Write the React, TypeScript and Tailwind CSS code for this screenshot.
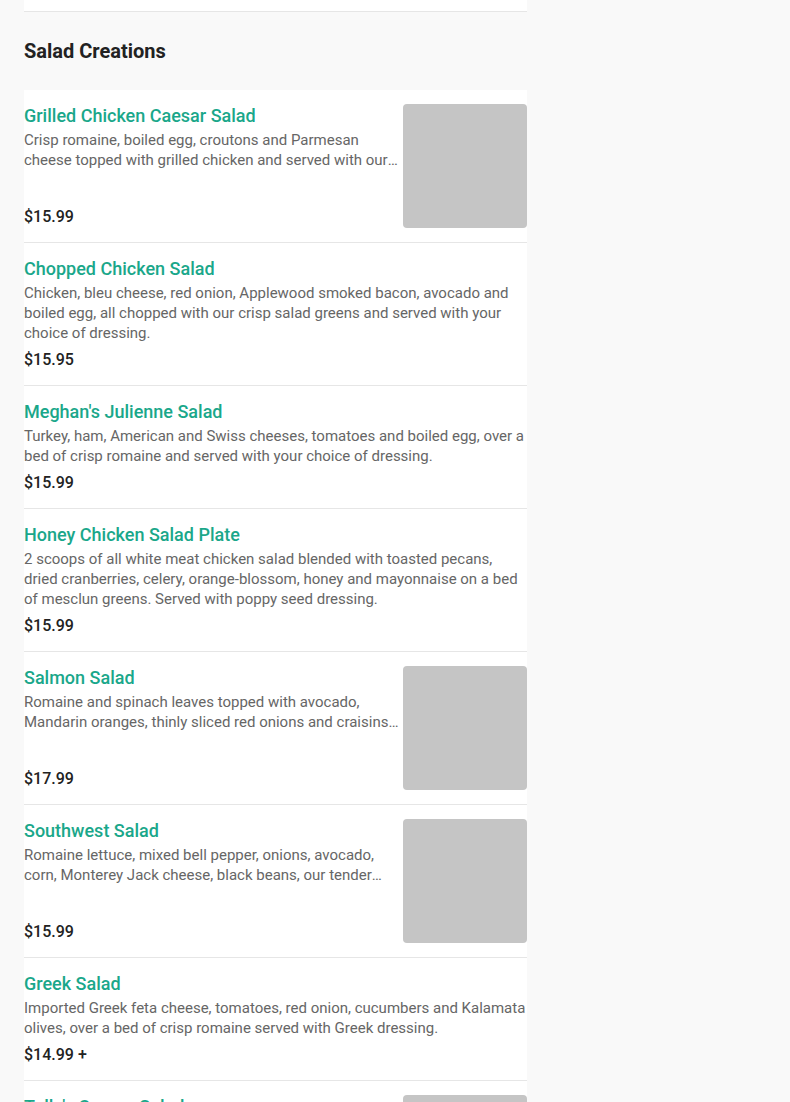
import React from "react";

type Item = { name: string; desc: string; price: string; img?: boolean };

const items: Item[] = [
  {
    name: "Grilled Chicken Caesar Salad",
    desc: "Crisp romaine, boiled egg, croutons and Parmesan cheese topped with grilled chicken and served with our homemade Caesar dressing.",
    price: "$15.99",
    img: true,
  },
  {
    name: "Chopped Chicken Salad",
    desc: "Chicken, bleu cheese, red onion, Applewood smoked bacon, avocado and boiled egg, all chopped with our crisp salad greens and served with your choice of dressing.",
    price: "$15.95",
  },
  {
    name: "Meghan's Julienne Salad",
    desc: "Turkey, ham, American and Swiss cheeses, tomatoes and boiled egg, over a bed of crisp romaine and served with your choice of dressing.",
    price: "$15.99",
  },
  {
    name: "Honey Chicken Salad Plate",
    desc: "2 scoops of all white meat chicken salad blended with toasted pecans, dried cranberries, celery, orange-blossom, honey and mayonnaise on a bed of mesclun greens. Served with poppy seed dressing.",
    price: "$15.99",
  },
  {
    name: "Salmon Salad",
    desc: "Romaine and spinach leaves topped with avocado, Mandarin oranges, thinly sliced red onions and craisins with grilled salmon and served with raspberry vinaigrette.",
    price: "$17.99",
    img: true,
  },
  {
    name: "Southwest Salad",
    desc: "Romaine lettuce, mixed bell pepper, onions, avocado, corn, Monterey Jack cheese, black beans, our tender grilled chicken and tortilla strips with chipotle ranch dressing.",
    price: "$15.99",
    img: true,
  },
  {
    name: "Greek Salad",
    desc: "Imported Greek feta cheese, tomatoes, red onion, cucumbers and Kalamata olives, over a bed of crisp romaine served with Greek dressing.",
    price: "$14.99 +",
  },
  {
    name: "Tully's Caesar Salad",
    desc: "Crisp romaine, croutons and Parmesan cheese tossed with our homemade Caesar dressing.",
    price: "$12.99",
    img: true,
  },
];

function Row({ item }: { item: Item }) {
  return (
    <div className="flex gap-1 border-b border-[#e6e6e6] py-[14px]">
      <div className="flex min-w-0 flex-1 flex-col justify-between">
        <div>
          <div className="pt-[1px] text-[18px] leading-[22px] font-medium text-[#1aa78a]">{item.name}</div>
          <div
            className={
              "mt-[3px] text-[15px] leading-[20px] text-[#666666] " + (item.img ? "line-clamp-2" : "")
            }
          >
            {item.desc}
          </div>
        </div>
        <div className="mt-[4px] pt-[2px] text-[16px] leading-[22px] font-medium text-[#222222]">
          {item.price}
        </div>
      </div>
      {item.img && <div className="h-[124px] w-[124px] shrink-0 rounded-[4px] bg-[#c5c5c5]" />}
    </div>
  );
}

export default function App() {
  return (
    <div
      className="min-h-[1102px] bg-[#f9f9f9]"
      style={{ fontFamily: "Roboto, 'Liberation Sans', sans-serif" }}
    >
      <div className="w-[503px] ml-6">
        <div className="h-[12px] border-b border-[#e6e6e6] bg-white" />
        <h2 className="mt-[25px] mb-[25px] text-[20px] leading-[28px] font-bold text-[#222222]">
          Salad Creations
        </h2>
        <div className="bg-white">
          {items.map((it) => (
            <Row key={it.name} item={it} />
          ))}
        </div>
      </div>
    </div>
  );
}
